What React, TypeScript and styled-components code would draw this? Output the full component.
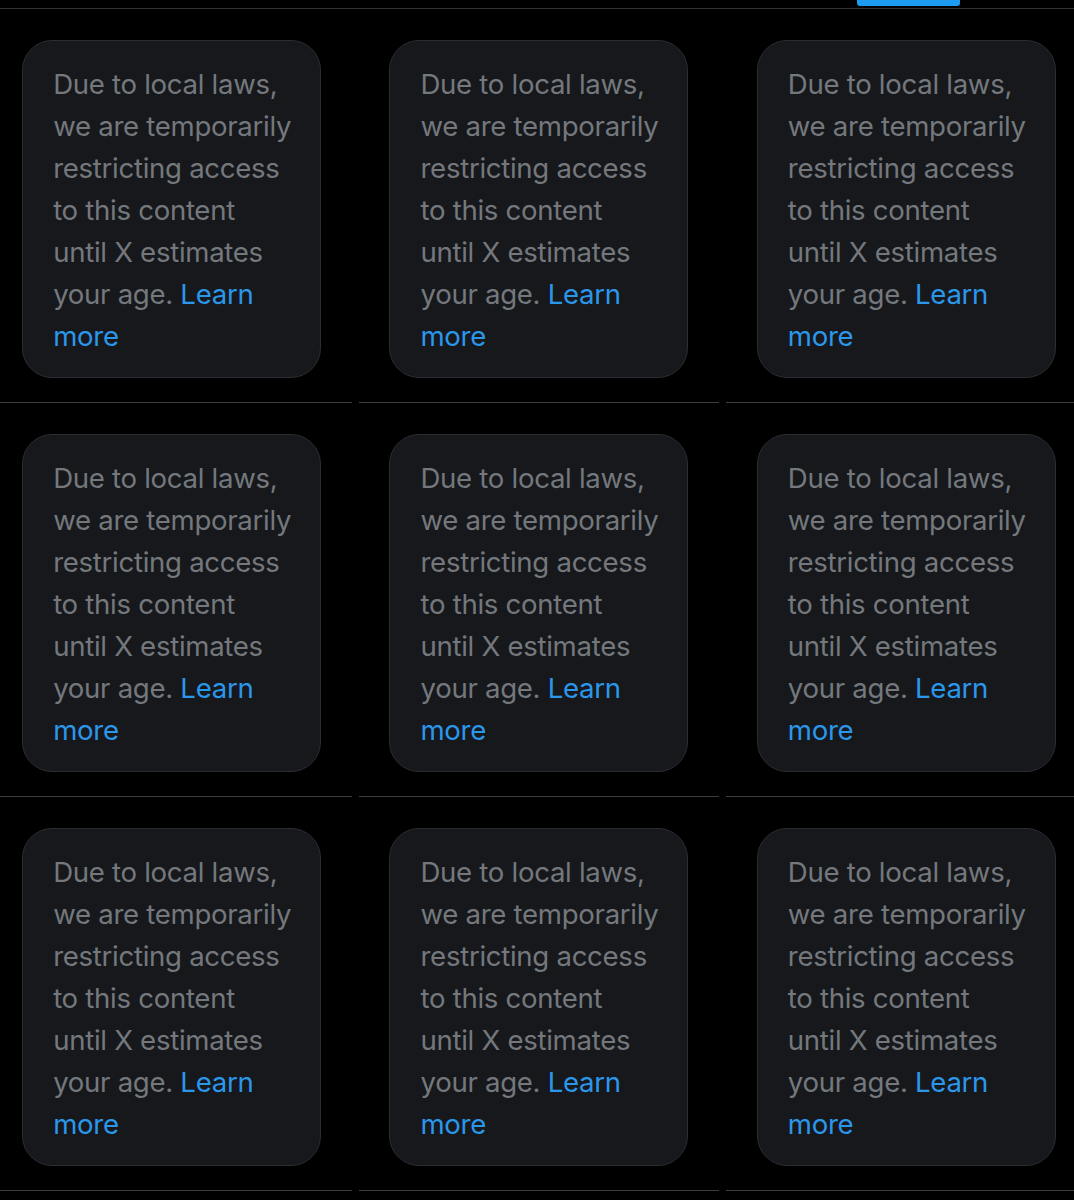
import React from "react";
import styled, { createGlobalStyle } from "styled-components";

const Global = createGlobalStyle`
  html, body {
    margin: 0;
    padding: 0;
    background: #000000;
    overflow-x: hidden;
  }
  body {
    font-family: Inter, "Liberation Sans", Arial, sans-serif;
  }
`;

const Page = styled.div`
  width: 1074px;
  overflow: hidden;
  background: #000;
`;

const TabBar = styled.div`
  display: flex;
  align-items: flex-start;
  height: 8px;
  border-bottom: 1px solid #2f3336;
`;

const Indicator = styled.div`
  width: 103px;
  height: 6px;
  margin-left: 857px;
  border-radius: 0 0 3px 3px;
  background: #1d9bf0;
`;

const Grid = styled.div`
  display: grid;
  grid-template-columns: repeat(3, 1fr);
  width: 1102px;
  margin-left: -12px;
`;

const Cell = styled.div`
  padding: 0 3.5px;
`;

const CellInner = styled.div`
  display: flex;
  justify-content: center;
  padding: 31px 0 24px;
  border-bottom: 1px solid #3a3d41;
`;

const Card = styled.div`
  box-sizing: border-box;
  width: 299px;
  height: 338px;
  padding: 22px 26px 20px 30px;
  background: #16181c;
  border: 1px solid #2a2d31;
  border-radius: 30px;
`;

const Message = styled.p`
  margin: 0;
  font-size: 27.6px;
  line-height: 42px;
  color: #74787d;
  letter-spacing: -0.3px;
`;

const LearnMore = styled.a`
  color: #2b97ea;
  text-decoration: none;
`;

export default function App() {
  const items = Array.from({ length: 9 }, (_, i) => i);
  return (
    <Page>
      <Global />
      <TabBar>
        <Indicator />
      </TabBar>
      <Grid>
        {items.map((i) => (
          <Cell key={i}>
            <CellInner>
              <Card>
                <Message>
                  Due to local laws, we are temporarily restricting access to this content until X estimates your age.{" "}
                  <LearnMore href="#">Learn more</LearnMore>
                </Message>
              </Card>
            </CellInner>
          </Cell>
        ))}
      </Grid>
    </Page>
  );
}
